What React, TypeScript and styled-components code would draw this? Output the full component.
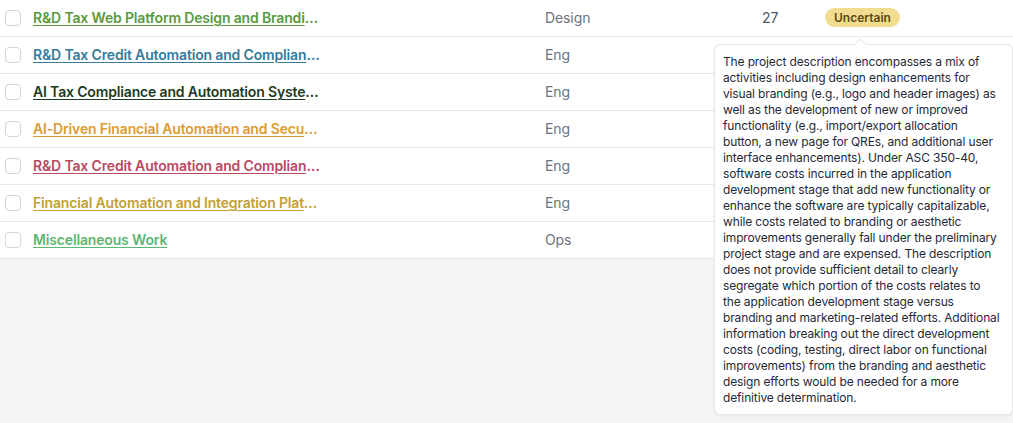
import React from "react";
import styled, { createGlobalStyle } from "styled-components";

const Global = createGlobalStyle`
  html, body { margin: 0; padding: 0; background: #f3f4f6; }
  body { font-family: Inter, "Noto Sans", sans-serif; -webkit-font-smoothing: antialiased; }
`;

const Page = styled.div`
  position: relative;
  width: 1013px;
  height: 423px;
  background: #f3f4f6;
  overflow: hidden;
`;

const Table = styled.div`
  background: #ffffff;
  display: flex;
  flex-direction: column;
`;

const Row = styled.div`
  display: grid;
  grid-template-columns: 33px 512px 217px 63px 1fr;
  align-items: center;
  height: 37px;
  padding-bottom: 1px;
  box-sizing: border-box;
  border-bottom: 1px solid #e5e7eb;
  font-size: 14px;
  letter-spacing: -0.1px;
`;

const CheckCell = styled.div`
  display: flex;
  align-items: center;
  padding-left: 5px;
`;

const Box = styled.span`
  width: 14px;
  height: 14px;
  border: 1px solid #d1d5db;
  border-radius: 4px;
  background: #fff;
`;

const TitleCell = styled.div`
  min-width: 0;
`;

const Title = styled.a<{ $c: string }>`
  display: block;
  max-width: 287px;
  white-space: nowrap;
  overflow: hidden;
  text-overflow: ellipsis;
  color: ${(p) => p.$c};
  font-weight: 600;
  letter-spacing: -0.16px;
  text-decoration: underline;
  text-underline-offset: 2px;
  text-decoration-thickness: 1px;
  cursor: pointer;
`;

const Dept = styled.div`
  color: #6b7280;
`;

const Num = styled.div`
  color: #4b5563;
`;

const Badge = styled.span`
  display: inline-flex;
  align-items: center;
  height: 19px;
  padding: 0 9px;
  border-radius: 999px;
  background: #f0dd8f;
  color: #5b4712;
  font-size: 12px;
  font-weight: 600;
  letter-spacing: 0;
`;

const Tooltip = styled.div`
  position: absolute;
  left: 714px;
  top: 44px;
  width: 283px;
  padding: 9px 6px 8px 8px;
  background: #fff;
  border: 1px solid #e5e7eb;
  border-radius: 6px;
  box-shadow: 0 1px 3px rgba(0, 0, 0, 0.06);
  color: #1f2937;
  font-size: 12px;
  line-height: 16px;
  letter-spacing: -0.14px;
  &::before {
    content: "";
    position: absolute;
    top: -5px;
    left: 141px;
    width: 8px;
    height: 8px;
    background: #fff;
    border-left: 1px solid #e5e7eb;
    border-top: 1px solid #e5e7eb;
    transform: rotate(45deg);
  }
`;

const Line = styled.span`
  display: block;
  white-space: nowrap;
`;

const rows = [
  { t: "R&D Tax Web Platform Design and Branding Refresh", c: "#5a9a3e", d: "Design", n: "27", b: true },
  { t: "R&D Tax Credit Automation and Compliance Suite", c: "#367b9b", d: "Eng" },
  { t: "AI Tax Compliance and Automation Systems", c: "#1d3a23", d: "Eng" },
  { t: "AI-Driven Financial Automation and Security", c: "#dc9a35", d: "Eng" },
  { t: "R&D Tax Credit Automation and Compliance Tools", c: "#b94a5f", d: "Eng" },
  { t: "Financial Automation and Integration Platform", c: "#c29f34", d: "Eng" },
  { t: "Miscellaneous Work", c: "#5db674", d: "Ops" },
];

const lines = [
  "The project description encompasses a mix of",
  "activities including design enhancements for",
  "visual branding (e.g., logo and header images) as",
  "well as the development of new or improved",
  "functionality (e.g., import/export allocation",
  "button, a new page for QREs, and additional user",
  "interface enhancements). Under ASC 350-40,",
  "software costs incurred in the application",
  "development stage that add new functionality or",
  "enhance the software are typically capitalizable,",
  "while costs related to branding or aesthetic",
  "improvements generally fall under the preliminary",
  "project stage and are expensed. The description",
  "does not provide sufficient detail to clearly",
  "segregate which portion of the costs relates to",
  "the application development stage versus",
  "branding and marketing-related efforts. Additional",
  "information breaking out the direct development",
  "costs (coding, testing, direct labor on functional",
  "improvements) from the branding and aesthetic",
  "design efforts would be needed for a more",
  "definitive determination.",
];

export default function App() {
  return (
    <Page>
      <Global />
      <Table>
        {rows.map((r, i) => (
          <Row key={i}>
            <CheckCell>
              <Box />
            </CheckCell>
            <TitleCell>
              <Title $c={r.c}>{r.t}</Title>
            </TitleCell>
            <Dept>{r.d}</Dept>
            <Num>{r.n ?? ""}</Num>
            <div>{r.b ? <Badge>Uncertain</Badge> : null}</div>
          </Row>
        ))}
      </Table>
      <Tooltip>
        {lines.map((l, i) => (
          <Line key={i}>{l}</Line>
        ))}
      </Tooltip>
    </Page>
  );
}
